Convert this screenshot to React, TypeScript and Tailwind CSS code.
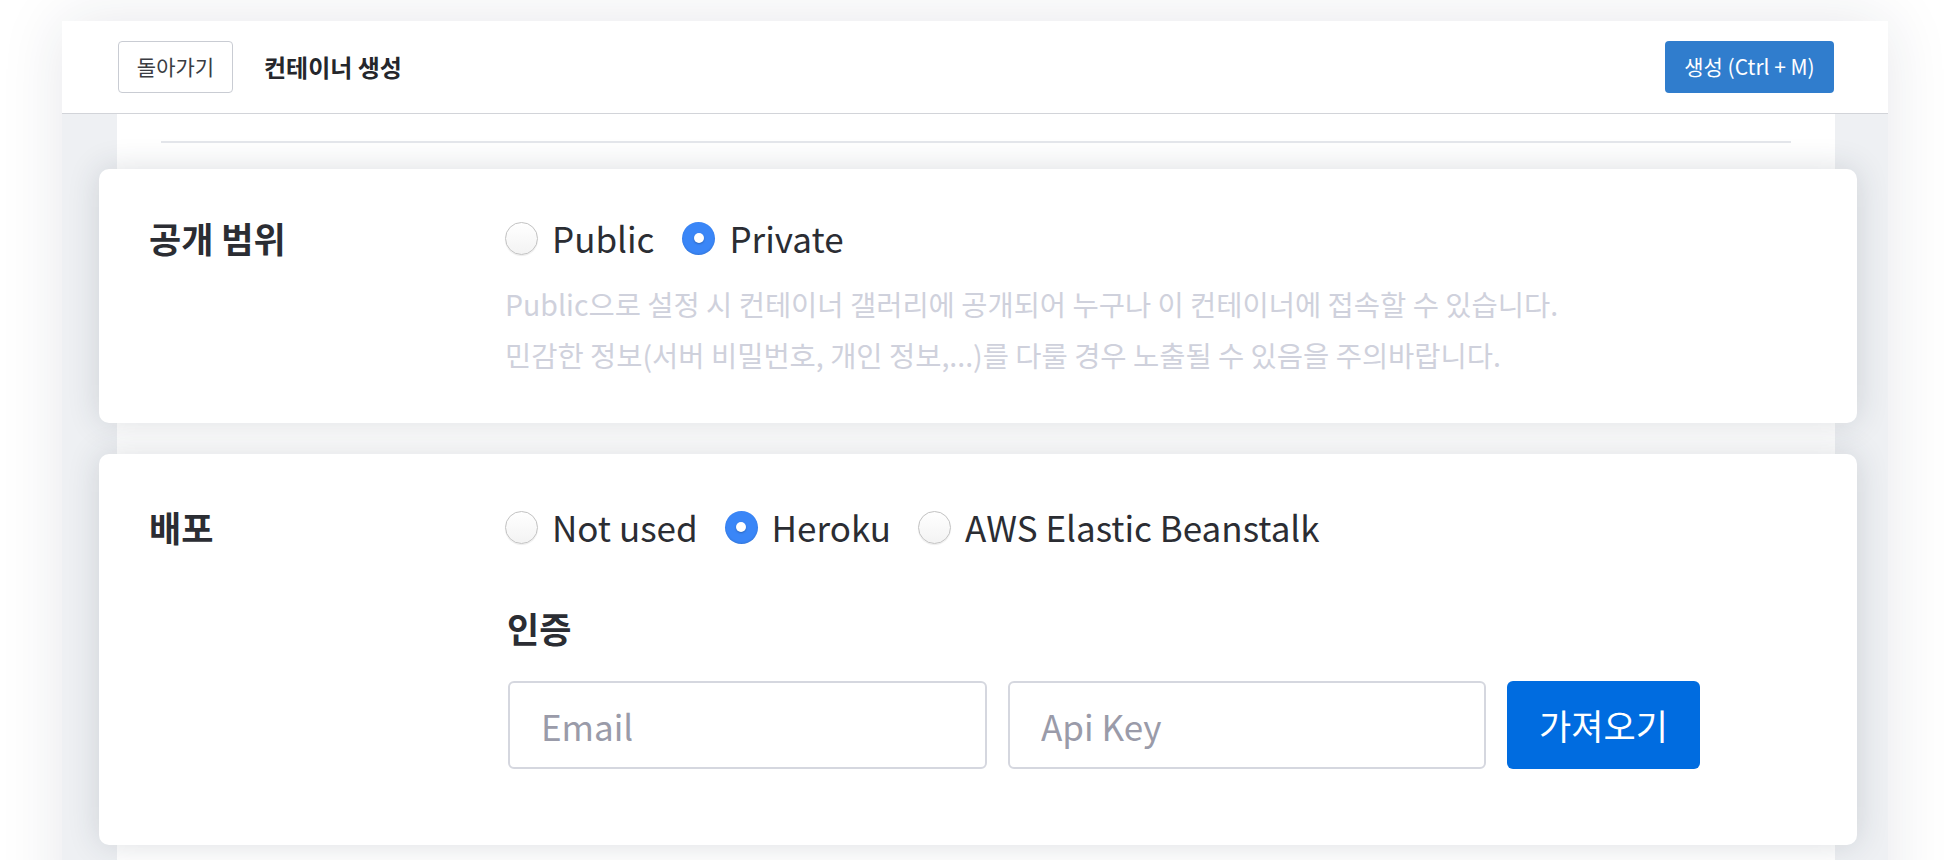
import React from 'react'

const Radio = ({ checked = false }: { checked?: boolean }) =>
  checked ? (
    <span className="flex h-[33px] w-[33px] shrink-0 items-center justify-center rounded-full bg-[#3a86f7] shadow-[inset_0_-1px_2px_rgba(0,0,0,0.12)]">
      <span className="h-[10px] w-[10px] rounded-full bg-white shadow-[0_1px_2px_rgba(0,0,0,0.25)]" />
    </span>
  ) : (
    <span className="h-[33px] w-[33px] shrink-0 rounded-full border-[1.5px] border-[#c2c2c2] bg-gradient-to-b from-white to-[#f3f3f3] shadow-[0_1px_1px_rgba(0,0,0,0.08)]" />
  )

const Option = ({ label, checked }: { label: string; checked?: boolean }) => (
  <label className="flex items-center gap-[14px]">
    <Radio checked={checked} />
    <span className="text-[35px] leading-[44px] text-[#2b2d33]">{label}</span>
  </label>
)

const Card = ({ className, children }: { className: string; children: React.ReactNode }) => (
  <section
    className={`ml-[-18px] mr-[-22px] flex rounded-[10px] bg-white pl-[50px] shadow-[0_0_32px_rgba(40,48,70,0.16)] ${className}`}
  >
    {children}
  </section>
)

export default function App() {
  return (
    <div className="min-h-screen overflow-hidden bg-white pl-[62px] pr-[58px] pt-[21px] font-['Noto_Sans_CJK_KR','Noto_Sans',sans-serif]">
      <div className="flex h-[900px] flex-col bg-[#eef0f3] shadow-[0_0_60px_rgba(30,40,60,0.11)]">
        <header className="flex h-[93px] shrink-0 items-center border-b border-[#d2d4d9] bg-white pl-[56px] pr-[54px]">
          <button className="h-[52px] w-[115px] rounded-[4px] border border-[#c9ccd3] bg-white text-[21px] text-[#3a3c42]">
            돌아가기
          </button>
          <h1 className="ml-[31px] text-[24px] font-bold text-[#25272c]">컨테이너 생성</h1>
          <button className="ml-auto h-[52px] w-[169px] rounded-[4px] bg-[#307dcd] text-[21px] text-white">
            생성 (Ctrl + M)
          </button>
        </header>

        <main className="ml-[55px] mr-[53px] flex flex-1 flex-col bg-white pt-[27px]">
          <div className="mx-[44px] h-[2px] bg-[#e4e6eb]" />

          <Card className="mt-[26px] pb-[43px] pt-[47px]">
            <div className="w-[356px] text-[35px] font-bold leading-[44px] text-[#2b2d33]">공개 범위</div>
            <div className="flex flex-col">
              <div className="flex items-center gap-[28px]">
                <Option label="Public" />
                <Option label="Private" checked />
              </div>
              <p className="mt-[18px] text-[28.5px] leading-[51px] text-[#cfd1dc]">
                Public으로 설정 시 컨테이너 갤러리에 공개되어 누구나 이 컨테이너에 접속할 수 있습니다.
                <br />
                민감한 정보(서버 비밀번호, 개인 정보,...)를 다룰 경우 노출될 수 있음을 주의바랍니다.
              </p>
            </div>
          </Card>

          <Card className="mt-[31px] pb-[76px] pt-[51px]">
            <div className="w-[356px] text-[35px] font-bold leading-[44px] text-[#2b2d33]">배포</div>
            <div className="flex flex-col">
              <div className="flex items-center gap-[27px]">
                <Option label="Not used" />
                <Option label="Heroku" checked />
                <Option label="AWS Elastic Beanstalk" />
              </div>
              <div className="mt-[59px] pl-[2px] text-[35px] font-bold leading-[40px] text-[#2b2d33]">인증</div>
              <div className="mt-[33px] flex gap-[21px] pl-[3px]">
                <input
                  placeholder="Email"
                  className="h-[88px] w-[479px] rounded-[6px] border-2 border-[#d5d7df] px-[31px] text-[35px] text-[#2b2d33] outline-none placeholder:text-[#9a9ba9]"
                />
                <input
                  placeholder="Api Key"
                  className="h-[88px] w-[478px] rounded-[6px] border-2 border-[#d5d7df] px-[31px] text-[35px] text-[#2b2d33] outline-none placeholder:text-[#9a9ba9]"
                />
                <button className="h-[88px] w-[193px] rounded-[6px] bg-[#006ce0] text-[35px] text-white">가져오기</button>
              </div>
            </div>
          </Card>
        </main>
      </div>
    </div>
  )
}
